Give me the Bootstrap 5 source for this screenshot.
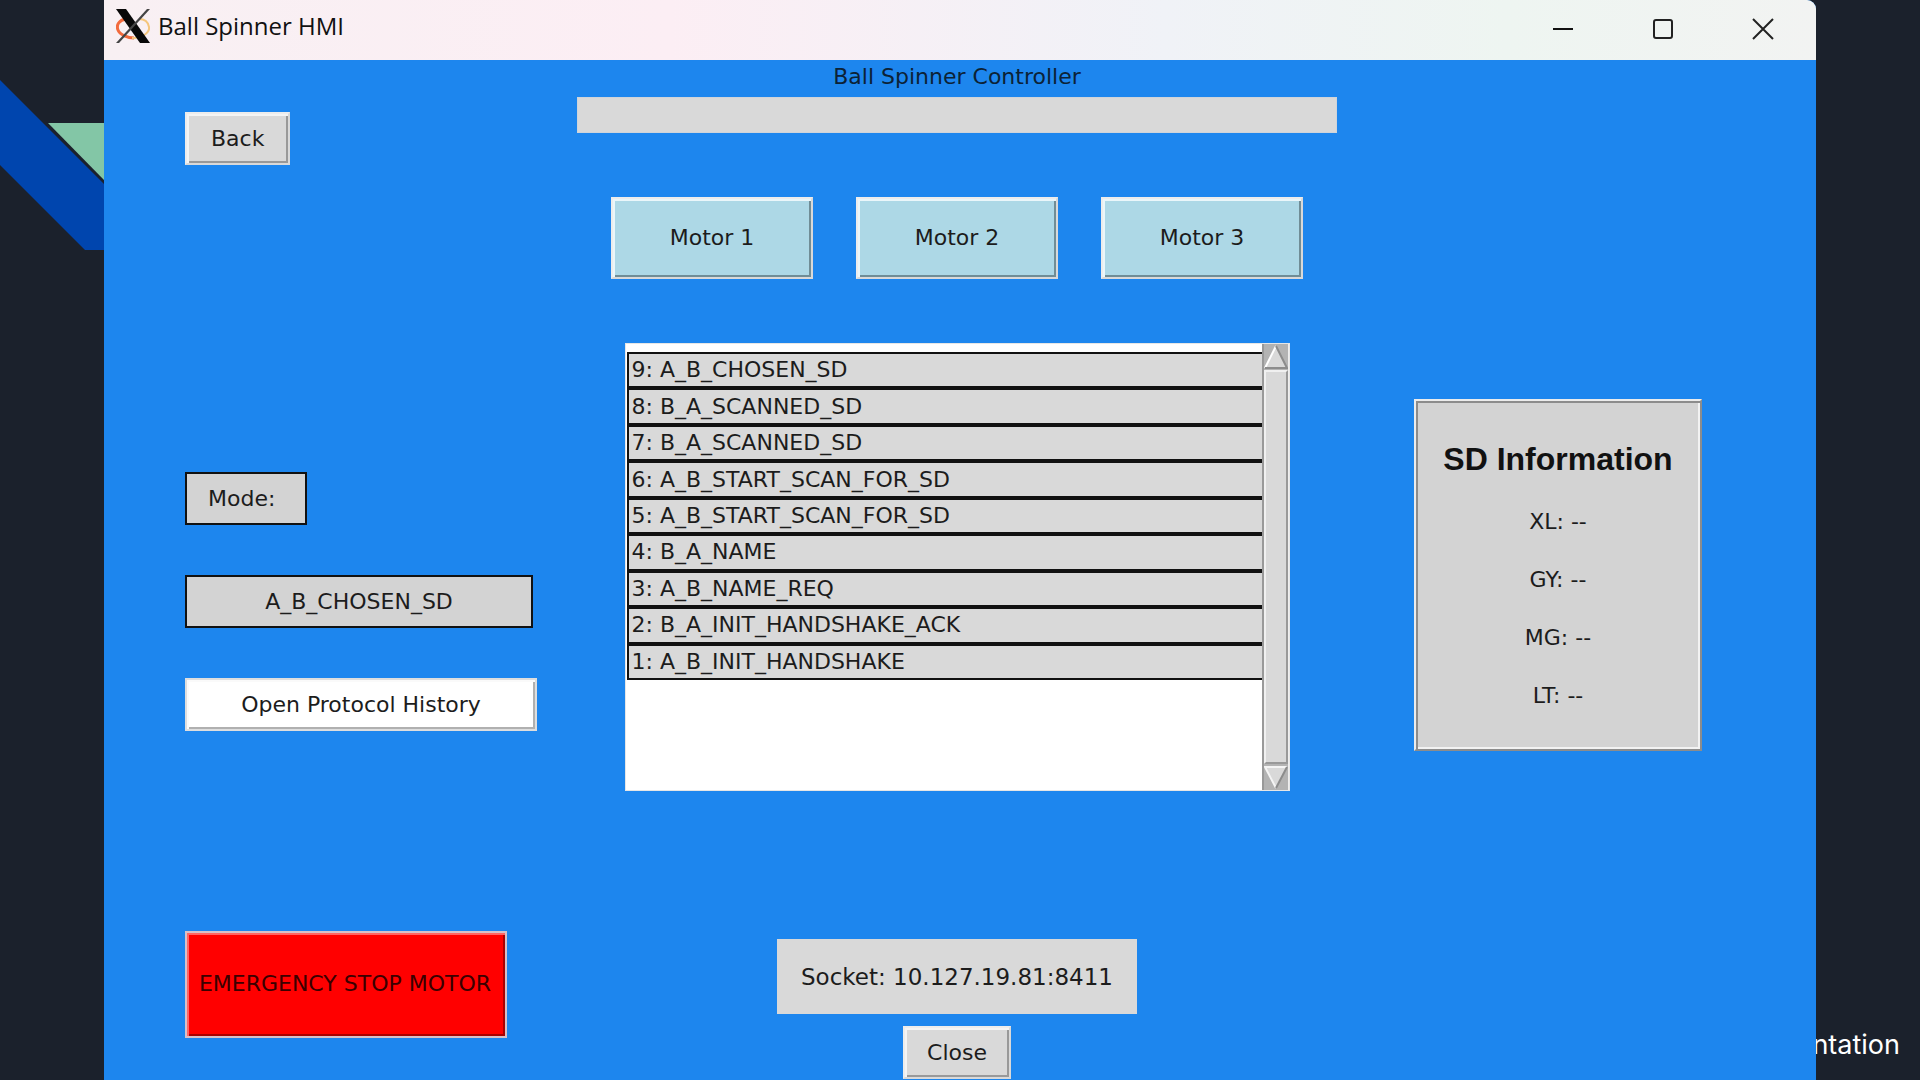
<!DOCTYPE html>
<html lang="en">
<head>
<meta charset="utf-8">
<meta name="viewport" content="width=device-width, initial-scale=1">
<title>Ball Spinner HMI</title>
<link href="https://cdn.jsdelivr.net/npm/bootstrap@5.3.0/dist/css/bootstrap.min.css" rel="stylesheet">
<style>
body { background: #1b212c; font-family: "DejaVu Sans", sans-serif; font-size: 22px; line-height: 26px; color: #1c1c1c; }
.slide { padding: 0 104px; isolation: isolate; }
.slide-shape { left: 0; top: 0; z-index: -1; }
.slide-caption { right: 20px; bottom: 19px; z-index: -1; color: #fff; font: 400 27px/32px Inter, sans-serif; }
.app-window { background: #1d86ee; border-top-right-radius: 9px; overflow: hidden; }
.titlebar { height: 60px; padding: 0 3px 8px 12px; background: linear-gradient(90deg, #f8f0f3 0%, #fceef4 33%, #f0f2f7 62%, #eef5f1 82%, #f2f3f2 100%); font: 24px/32px "Open Sans", sans-serif; color: #111; }
.win-btn { width: 100px; padding: 0; border: 0; background: none; }
.client { padding: 0 114px 0 81px; }
.side-left { width: 352px; padding-top: 52px; }
.middle { padding: 2px 77px 1px 40px; }
.side-right { width: 288px; padding-top: 339px; }
.tk-btn { border: 2px solid #d9d9d9; border-top-color: #ececec; border-left-color: #ececec; border-radius: 0; background: #d9d9d9; color: #1c1c1c; padding: 0 24px; height: 53px; font-size: inherit; line-height: 26px; box-shadow: inset 2px 2px #f4f4f4, inset -2px -2px #999; }
.tk-motor { width: 202px; height: 82px; background: #add8e6; box-shadow: inset 2px 2px #eaf6fa, inset -2px -2px #708d96; }
.tk-history { width: 352px; background: #fff; border-color: #dedede; box-shadow: inset 2px 2px #fafafa, inset -2px -2px #b0b0b0; }
.tk-stop { width: 322px; height: 107px; margin-top: 200px; padding: 0 8px 2px 6px; background: #f00; color: #3a0000; border-color: #d8c0c8; box-shadow: inset 2px 2px #ff6464, inset -2px -2px #a80000; }
.tk-close { padding: 0 22px; margin-top: 12px; }
.tk-label { border: 2px solid #111; background: #d3d3d3; height: 53px; }
.mode-name { width: 122px; padding-left: 21px; margin-top: 307px; }
.mode-value { width: 348px; }
.field-gap { gap: 50px; }
.entry { width: 100%; height: 36px; border: 1px solid #cfd4da; background: #d9d9d9; padding: 0 8px; }
.entry-label { line-height: 30px; margin-bottom: 5px; color: #0c2236; }
.motors { gap: 43px; margin-top: 64px; }
.history { width: 665px; height: 448px; margin-top: 64px; background: #fff; border: 1px solid #e6e6e6; }
.history-list { display: grid; grid-auto-rows: 1fr; height: 328px; margin: 8px 0 0 1px; }
.history-row { border: 2px solid #111; border-right: 0; background: #d9d9d9; padding-left: 3px; display: flex; align-items: center; }
.scroller { width: 27px; background: #b3b3b3; border-left: 2px solid #999; border-right: 1px solid #eee; }
.scroller button { border: 0; padding: 0; background: none; height: 26px; line-height: 0; }
.thumb { border: 2px solid #f0f0f0; border-right-color: #999; border-bottom-color: #999; background: #d9d9d9; }
.socket { margin-top: 148px; height: 75px; padding: 0 24px; background: #d9d9d9; font-size: 23px; }
.sd-card { height: 352px; padding-top: 32px; background: #d3d3d3; border: 2px solid #ececec; border-right-color: #8c8c8c; border-bottom-color: #8c8c8c; box-shadow: inset 2px 2px #8c8c8c, inset -2px -2px #f2f2f2; }
.sd-title { font: bold 32px/52px "Liberation Sans", sans-serif; margin: 0 0 24px; color: #111; }
.sd-list { gap: 32px; }
</style>
<script src="https://cdn.jsdelivr.net/npm/bootstrap@5.3.0/dist/js/bootstrap.bundle.min.js"></script>
</head>
<body>
<div class="slide position-relative min-vh-100 d-flex overflow-hidden">
  <svg class="slide-shape position-absolute" width="104" height="250" viewBox="0 0 104 250" aria-hidden="true">
    <path fill="#0045ae" d="M0 80 104 184V250H85L0 165Z"/>
    <path fill="#83c6a6" d="M48 123H104V180Z"/>
  </svg>
  <span class="slide-caption position-absolute">ntation</span>

  <main class="app-window flex-grow-1 d-flex flex-column">
    <header class="titlebar d-flex align-items-center">
      <svg width="34" height="34" viewBox="0 0 34 34" aria-hidden="true">
        <path d="M10 10C3 11 0 16 2 21S12 29 18 29" fill="none" stroke="#f26a3c" stroke-width="3"/>
        <path d="M16 29C26 29 34 24 33 18S28 10 23 10" fill="none" stroke="#f5c67c" stroke-width="2"/>
        <path d="M0 0H10L34 34H24Z" fill="#080808"/>
        <path d="M31 0H34L3 34H0Z" fill="#444"/>
      </svg>
      <span class="ms-2 me-auto">Ball Spinner HMI</span>
      <button class="win-btn" aria-label="Minimize"><svg width="22" height="22"><path d="M1 11H21" stroke="#111" stroke-width="2"/></svg></button>
      <button class="win-btn" aria-label="Maximize"><svg width="22" height="22"><rect x="2" y="2" width="18" height="18" rx="2" fill="none" stroke="#222" stroke-width="2"/></svg></button>
      <button class="win-btn" aria-label="Close window"><svg width="22" height="22"><path d="M1 1 21 21M21 1 1 21" stroke="#222" stroke-width="2"/></svg></button>
    </header>

    <div class="client d-flex flex-grow-1">
      <section class="side-left flex-shrink-0">
        <button class="btn tk-btn">Back</button>
        <div class="d-flex flex-column align-items-start field-gap">
          <div class="tk-label mode-name d-flex align-items-center">Mode:</div>
          <div class="tk-label mode-value d-flex align-items-center justify-content-center">A_B_CHOSEN_SD</div>
          <button class="btn tk-btn tk-history">Open Protocol History</button>
        </div>
        <button class="btn tk-btn tk-stop">EMERGENCY STOP MOTOR</button>
      </section>

      <section class="middle flex-grow-1 d-flex flex-column align-items-center">
        <label class="entry-label" for="controller">Ball Spinner Controller</label>
        <input class="entry" id="controller" type="text">
        <div class="motors d-flex">
          <button class="btn tk-btn tk-motor">Motor 1</button>
          <button class="btn tk-btn tk-motor">Motor 2</button>
          <button class="btn tk-btn tk-motor">Motor 3</button>
        </div>
        <div class="history d-flex">
          <ul class="history-list list-unstyled flex-grow-1">
            <li class="history-row">9: A_B_CHOSEN_SD</li>
            <li class="history-row">8: B_A_SCANNED_SD</li>
            <li class="history-row">7: B_A_SCANNED_SD</li>
            <li class="history-row">6: A_B_START_SCAN_FOR_SD</li>
            <li class="history-row">5: A_B_START_SCAN_FOR_SD</li>
            <li class="history-row">4: B_A_NAME</li>
            <li class="history-row">3: A_B_NAME_REQ</li>
            <li class="history-row">2: B_A_INIT_HANDSHAKE_ACK</li>
            <li class="history-row">1: A_B_INIT_HANDSHAKE</li>
          </ul>
          <div class="scroller d-flex flex-column">
            <button aria-label="Scroll up"><svg width="24" height="26"><path d="M12 2 23 24H1Z" fill="#d9d9d9"/><path d="M1 24 12 2" stroke="#fff" stroke-width="2"/><path d="M12 2 23 24H1" fill="none" stroke="#8c8c8c" stroke-width="2"/></svg></button>
            <div class="thumb flex-grow-1"></div>
            <button aria-label="Scroll down"><svg width="24" height="26"><path d="M1 3H23L12 24Z" fill="#d9d9d9"/><path d="M23 3H1L12 24" fill="none" stroke="#f4f4f4" stroke-width="2"/><path d="M23 3 12 24" stroke="#8c8c8c" stroke-width="2"/></svg></button>
          </div>
        </div>
        <div class="socket d-flex align-items-center">Socket: 10.127.19.81:8411</div>
        <button class="btn tk-btn tk-close">Close</button>
      </section>

      <aside class="side-right flex-shrink-0">
        <div class="sd-card text-center">
          <h2 class="sd-title">SD Information</h2>
          <div class="sd-list d-flex flex-column">
            <span>XL: --</span><span>GY: --</span><span>MG: --</span><span>LT: --</span>
          </div>
        </div>
      </aside>
    </div>
  </main>
</div>
</body>
</html>
